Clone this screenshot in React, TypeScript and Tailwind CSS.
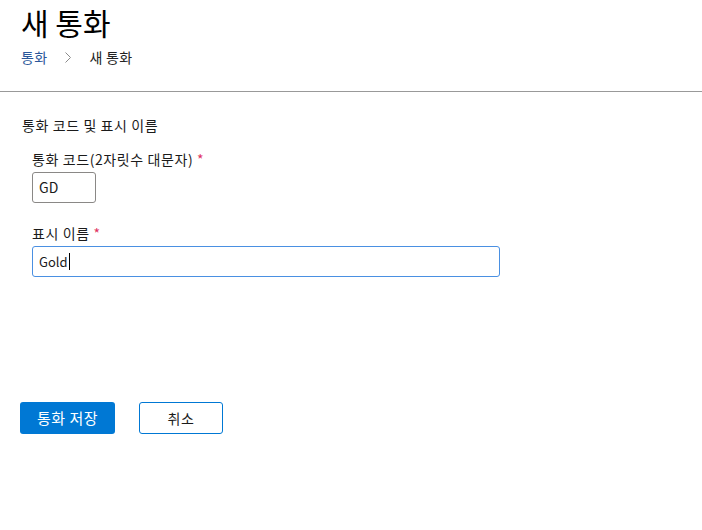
import React from "react";

export default function App() {
  const font = { fontFamily: '"Noto Sans CJK KR", "Noto Sans", sans-serif' };
  return (
    <div className="w-[702px] h-[530px] bg-white text-[#1b1b1b] overflow-hidden" style={font}>
      <div className="pl-[21px]">
        <h1 className="text-[30px] leading-[44px] font-normal text-black">새 통화</h1>
        <div className="flex items-center text-[14px] leading-[20px] mt-[3px]">
          <span className="text-[#2b579a] tracking-[0.3px]">통화</span>
          <svg width="6" height="11" viewBox="0 0 6 11" className="ml-[18px] mr-[18px]">
            <path d="M0.5 0.5 L5.5 5.5 L0.5 10.5" fill="none" stroke="#8a8a8a" strokeWidth="1" />
          </svg>
          <span className="text-[#222] tracking-[0.3px]">새 통화</span>
        </div>
      </div>
      <div className="h-px bg-[#999] mt-[24px]" />
      <div className="pl-[22px] pt-[24px]">
        <div className="text-[14px] leading-[18px] tracking-[0.6px]">통화 코드 및 표시 이름</div>
        <div className="pl-[10px] mt-[16px]">
          <div className="text-[14px] leading-[18px] tracking-[0.6px]">
            통화 코드(2자릿수 대문자) <span className="text-[#e0325f]">*</span>
          </div>
          <div className="mt-[4px] w-[64px] h-[31px] border border-[#8a8886] rounded-[3px] flex items-center pl-[6px] text-[14px]">
            GD
          </div>
          <div className="text-[14px] leading-[18px] tracking-[0.6px] mt-[21px]">
            표시 이름 <span className="text-[#e0325f]">*</span>
          </div>
          <div className="mt-[4px] w-[468px] h-[31px] border border-[#4a90e2] rounded-[3px] flex items-center pl-[6px] text-[13px]">
            Gold<span className="inline-block w-px h-[17px] bg-black ml-[1px]" />
          </div>
        </div>
        <div className="flex mt-[125px] -ml-[2px] gap-[24px]">
          <button className="w-[95px] h-[32px] bg-[#0078d4] text-white text-[15px] tracking-[0.5px] rounded-[3px]">통화 저장</button>
          <button className="w-[84px] h-[32px] bg-white border border-[#0078d4] text-[#1b1b1b] text-[14px] tracking-[0.5px] rounded-[3px]">취소</button>
        </div>
      </div>
    </div>
  );
}
